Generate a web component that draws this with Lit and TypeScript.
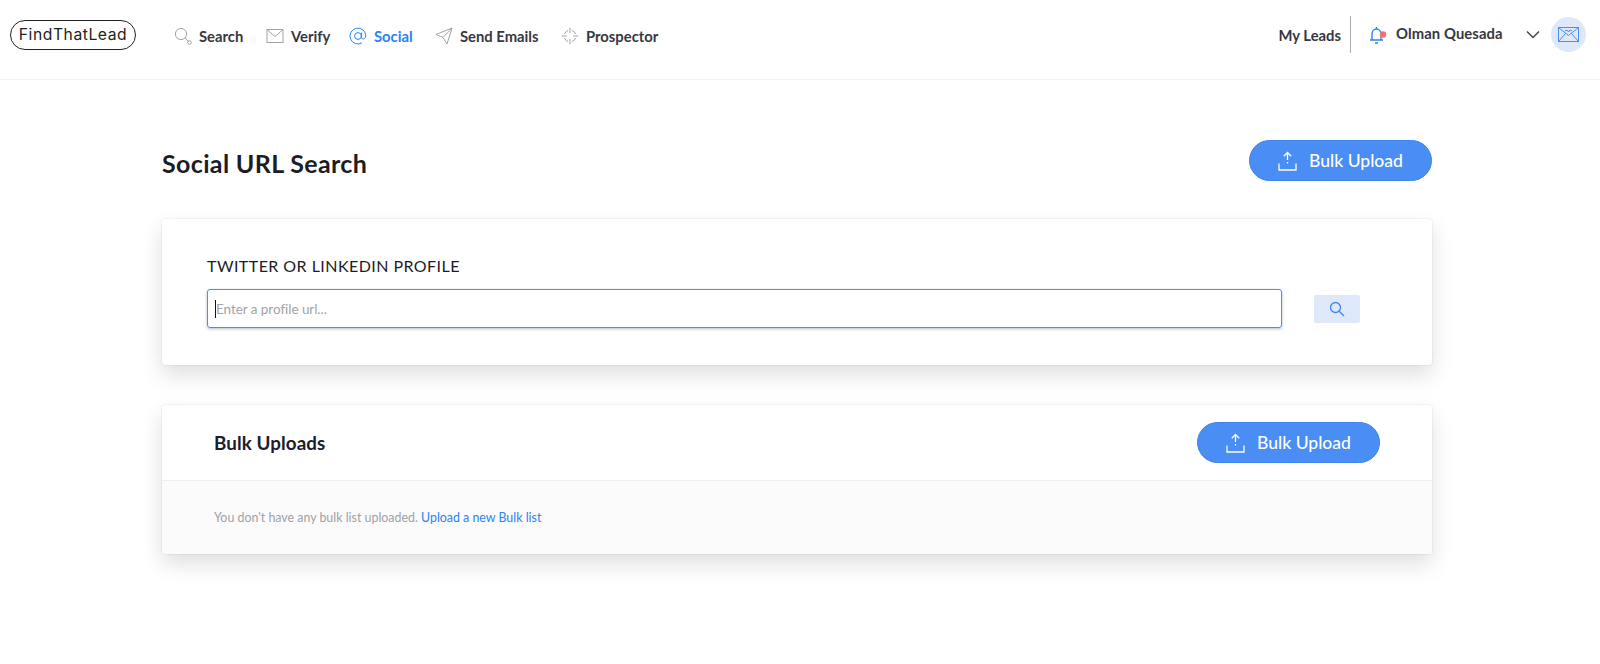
import { LitElement, html, css, svg } from "lit";
import { customElement } from "lit/decorators.js";

const uploadIcon = html`<svg class="up" width="19" height="20" viewBox="0 0 19 20" fill="none" stroke="#fff" stroke-width="1.3"><path d="M9.500 1.500V9M9.500 11v1.500M5.800 5.200 9.500 1.500l3.700 3.700M1 12.500v6.500h17v-6.500"/></svg>`;

const bulk = html`<button class="bulk">${uploadIcon}<span>Bulk Upload</span></button>`;

const navItems = [
  { label: "Search", w: 92, icon: svg`<circle cx="7" cy="7" r="5.600"/><path d="M11 11l3.500 3.500"/><circle cx="15.500" cy="15.500" r="1.800"/>` },
  { label: "Verify", w: 83, icon: svg`<rect x="1" y="2.500" width="16" height="13"/><path d="M1 2.500l8 7 8-7"/>` },
  { label: "Social", w: 86, active: true, icon: svg`<circle cx="9" cy="9" r="3.400"/><path d="M12.400 5.600v4.600c0 2.800 4.400 2.400 4.400-1.200A7.900 7.900 0 1 0 13 15.800"/>` },
  { label: "Send Emails", w: 126, icon: svg`<path d="M1 7.500 17 1l-5 16-4-6.500zM17 1 8 10.500"/>` },
  { label: "Prospector", w: 96, icon: svg`<path d="M7 3.400A6 6 0 0 0 3.400 7M11 3.400A6 6 0 0 1 14.600 7M3.400 11A6 6 0 0 0 7 14.600M14.600 11A6 6 0 0 1 11 14.600M9 .8v5M9 12.200v5M.8 9h5M12.200 9h5"/>` },
];

@customElement("app-root")
export class AppRoot extends LitElement {
  static styles = css`
    :host { display: block; height: 664px; background: #fff; font-family: "Lato", "Liberation Sans", sans-serif; color: #1c1c26; overflow: hidden; }
    header { height: 80px; box-sizing: border-box; border-bottom: 1px solid #f3f3f4; display: flex; align-items: center; padding: 0 14px 9px 10px; }
    .logo { box-sizing: border-box; width: 126px; height: 30px; border: 1.750px solid #222; border-radius: 15px; display: flex; align-items: center; justify-content: center; font-family: "Inter", sans-serif; font-size: 15.700px; letter-spacing: 0.55px; color: #222; margin-top: -1px; }
    nav { display: flex; margin-left: 38px; margin-top: 2px; }
    .nav-item { display: flex; align-items: center; gap: 7px; font-size: 14.800px; font-weight: 700; color: #37373f; flex: none; }
    .nav-item svg { fill: none; stroke: #a3a3a8; stroke-width: 1; flex: none; }
    .nav-item.active { color: #2a82f5; }
    .nav-item.active svg { stroke: #2a82f5; }
    .right { margin-left: auto; display: flex; align-items: center; font-size: 14.800px; font-weight: 700; color: #37373f; margin-top: -1px; }
    .divider { width: 1px; height: 37px; background: #aaa; margin: 0 18px 0 9px; }
    .bell { display: block; width: 18px; height: 20px; margin-right: 9px; }
    .name { letter-spacing: 0.1px; width: 130px; margin-top: -3px; }
    .avatar { width: 35px; height: 35px; border-radius: 50%; background: #dfe8fb; display: flex; align-items: center; justify-content: center; margin-left: 11px; }
    main { width: 1270px; margin-left: 162px; padding-top: 60px; }
    .title-row { display: flex; justify-content: space-between; align-items: flex-start; height: 79px; }
    h1 { margin: 10px 0 0; font-size: 25px; line-height: 26px; font-weight: 700; color: #1c1c26; letter-spacing: 0.35px; }
    .bulk { box-sizing: border-box; width: 183px; height: 41px; border-radius: 21px; border: 1px solid #3d84ee; background: #4a8ef5; color: #fff; display: flex; align-items: center; justify-content: center; gap: 12px; font: 500 17.500px "Lato", sans-serif; padding: 0; }
    .card { background: #fff; border-radius: 3px; box-shadow: 0 0 2px rgba(0,0,0,.14), 0 10px 22px rgba(0,0,0,.13); }
    .search-card { height: 146px; box-sizing: border-box; padding: 37px 45px 0; margin-bottom: 40px; }
    label { display: block; font-size: 16px; line-height: 20px; color: #1c1c26; letter-spacing: 0.45px; margin-bottom: 13px; }
    .search-row { display: flex; align-items: center; }
    .field { box-sizing: border-box; width: 1075px; height: 39px; border: 1px solid #4a8ef5; border-radius: 3px; box-shadow: 0 1px 3px rgba(30,60,120,.35); display: flex; align-items: center; padding-left: 7px; font-size: 13.500px; color: #a2a2a8; letter-spacing: -0.05px; }
    .caret { width: 1px; height: 18px; background: #111; }
    .go { width: 46px; height: 28px; margin-left: 32px; background: #dfe8fb; border-radius: 2px; display: flex; align-items: center; justify-content: center; }
    .card-head { height: 76px; box-sizing: border-box; display: flex; align-items: center; justify-content: space-between; padding: 0 52px; border-bottom: 1px solid #eeeef0; }
    h2 { margin: 0; font-size: 18.800px; font-weight: 700; color: #1c1c2c; letter-spacing: 0.1px; }
    .card-body { height: 73px; box-sizing: border-box; background: #fbfbfc; border-radius: 0 0 3px 3px; padding: 28px 52px 0; font-size: 12.400px; line-height: 17px; color: #a0a0a6; }
    .card-body a { color: #2a82f5; text-decoration: none; }
  `;

  render() {
    return html`
      <header>
        <div class="logo">FindThatLead</div>
        <nav>
          ${navItems.map(
            (n) => html`<div class="nav-item ${n.active ? "active" : ""}" style="width:${n.w}px">
              <svg width="18" height="18" viewBox="0 0 18 18">${n.icon}</svg><span>${n.label}</span>
            </div>`
          )}
        </nav>
        <div class="right">
          <span>My Leads</span>
          <span class="divider"></span>
          <svg class="bell" viewBox="0 0 18 20" fill="none" stroke="#2a82f5" stroke-width="1.400"><path d="M1 15h13M3 15V9a4.500 5 0 0 1 9 0v6M7.500 2v2M6 18h3"/><circle cx="14" cy="9.500" r="3.200" fill="#f0706a" stroke="none"/></svg>
          <span class="name">Olman Quesada</span>
          <svg width="14" height="9" viewBox="0 0 14 9" fill="none" stroke="#444" stroke-width="1.500"><path d="M1 1.500 7 7.500l6-6"/></svg>
          <div class="avatar"><svg width="21" height="15" viewBox="0 0 21 15" fill="none" stroke="#4a8ef5" stroke-width="1"><rect x=".5" y=".5" width="20" height="14"/><path d="M.5.500l10 8 10-8M.5 14.500l7-8M20.500 14.500l-7-8M7 4a2 2 0 0 1 3.500 1 2 2 0 0 1 3.500-1"/></svg></div>
        </div>
      </header>
      <main>
        <div class="title-row"><h1>Social URL Search</h1>${bulk}</div>
        <section class="card search-card">
          <label>TWITTER OR LINKEDIN PROFILE</label>
          <div class="search-row">
            <div class="field"><span class="caret"></span><span>Enter a profile url...</span></div>
            <div class="go"><svg width="16" height="16" viewBox="0 0 16 16" fill="none" stroke="#3d86f0" stroke-width="1.300"><circle cx="6.500" cy="6.500" r="5"/><path d="M10.200 10.200 15 15"/></svg></div>
          </div>
        </section>
        <section class="card">
          <div class="card-head"><h2>Bulk Uploads</h2>${bulk}</div>
          <div class="card-body">You don't have any bulk list uploaded. <a>Upload a new Bulk list</a></div>
        </section>
      </main>
    `;
  }
}
